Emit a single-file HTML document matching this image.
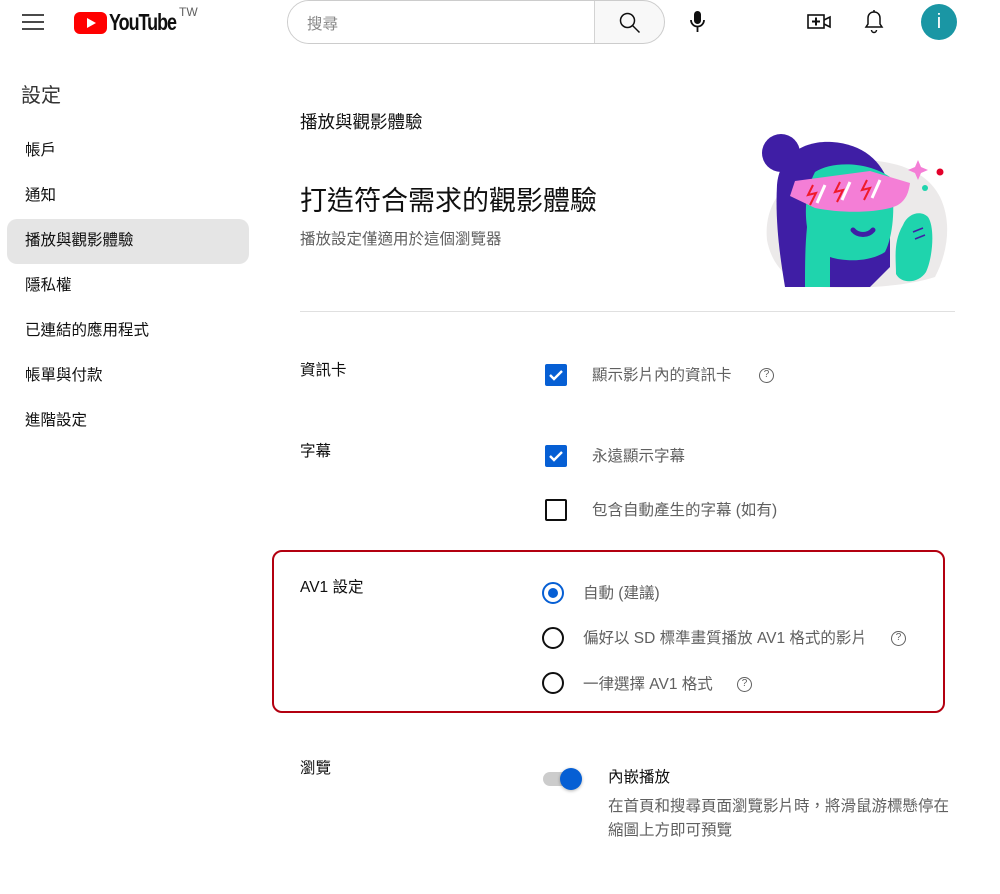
<!DOCTYPE html>
<html><head><meta charset="utf-8">
<style>
*{margin:0;padding:0;box-sizing:border-box}
body{width:1000px;height:894px;background:#fff;font-family:"Liberation Sans","Noto Sans CJK TC",sans-serif;color:#0f0f0f;position:relative;overflow:hidden}
.a{position:absolute;white-space:nowrap}
.side{font-size:15.5px;left:25px;line-height:20px}
.g{color:#606060;font-size:15.5px;line-height:20px}
.cb{position:absolute;width:22px;height:22px;border-radius:2px;background:#065fd4}
.cbo{position:absolute;width:22px;height:22px;border-radius:2px;border:2px solid #0f0f0f}
.rd{position:absolute;width:22px;height:22px;border-radius:50%;border:2px solid #0f0f0f}
.q{position:absolute;width:15px;height:15px;border-radius:50%;border:1.3px solid #606060;font-size:10px;line-height:12px;text-align:center;color:#606060}
</style></head><body>
<!-- header -->
<svg class="a" style="left:22px;top:13px" width="22" height="18"><path d="M0 2h22M0 9h22M0 16h22" stroke="#0f0f0f" stroke-width="1.6"/></svg>
<svg class="a" style="left:74px;top:12px" width="33" height="22"><rect width="33" height="22" rx="6" fill="#f00"/><path d="M13 6v10l9-5z" fill="#fff"/></svg>
<div class="a" style="left:109px;top:9px;font-size:23px;font-weight:bold;letter-spacing:-1.3px;transform:scaleX(.78);transform-origin:left">YouTube</div>
<div class="a" style="left:179px;top:5px;font-size:12px;color:#606060">TW</div>
<div class="a" style="left:287px;top:0;width:378px;height:44px;border:1px solid #ccc;border-radius:22px;background:#f8f8f8;overflow:hidden">
 <div style="position:absolute;left:0;top:0;width:307px;height:42px;background:#fff;border-right:1px solid #d3d3d3"></div>
 <div style="position:absolute;left:19px;top:11px;font-size:15.5px;color:#888">搜尋</div>
 <svg style="position:absolute;left:330px;top:10px" width="24" height="24"><circle cx="9.5" cy="9.5" r="7" fill="none" stroke="#0f0f0f" stroke-width="1.5"/><path d="M14.5 14.5l7 7" stroke="#0f0f0f" stroke-width="1.5"/></svg>
</div>
<svg class="a" style="left:688px;top:10px" width="20" height="24"><rect x="6" y="1" width="7" height="13" rx="3.5" fill="#0f0f0f"/><path d="M3 10a6.5 6.5 0 0013 0M9.5 17v5" stroke="#0f0f0f" stroke-width="1.8" fill="none"/></svg>
<svg class="a" style="left:807px;top:11px" width="26" height="22"><rect x="1" y="4" width="16" height="13" fill="none" stroke="#0f0f0f" stroke-width="1.6"/><path d="M9 6.5v8M5 10.5h8" stroke="#0f0f0f" stroke-width="2"/><path d="M17 9l6-3v10l-6-3" fill="none" stroke="#0f0f0f" stroke-width="1.6"/></svg>
<svg class="a" style="left:862px;top:9px" width="24" height="26"><path d="M12 3c-4 0-6 3-6 6v6l-2 3h16l-2-3V9c0-3-2-6-6-6z" fill="none" stroke="#0f0f0f" stroke-width="1.5"/><path d="M12 1v2M9.5 21a2.5 2.5 0 005 0" stroke="#0f0f0f" stroke-width="1.5" fill="none"/></svg>
<div class="a" style="left:921px;top:4px;width:36px;height:36px;border-radius:50%;background:#1a96a4;color:#fff;font-size:20px;text-align:center;line-height:36px">i</div>

<!-- sidebar -->
<div class="a" style="left:21px;top:79px;font-size:20px;color:#333">設定</div>
<div class="a" style="left:7px;top:219px;width:242px;height:45px;border-radius:10px;background:#e5e5e5"></div>
<div class="a side" style="top:141px">帳戶</div>
<div class="a side" style="top:186px">通知</div>
<div class="a side" style="top:231px">播放與觀影體驗</div>
<div class="a side" style="top:276px">隱私權</div>
<div class="a side" style="top:321px">已連結的應用程式</div>
<div class="a side" style="top:366px">帳單與付款</div>
<div class="a side" style="top:411px">進階設定</div>

<!-- main -->
<div class="a" style="left:300px;top:109px;font-size:17.5px">播放與觀影體驗</div>
<div class="a" style="left:300px;top:179px;font-size:27px;color:#0f0f0f">打造符合需求的觀影體驗</div>
<div class="a g" style="left:300px;top:230px">播放設定僅適用於這個瀏覽器</div>
<svg class="a" style="left:755px;top:130px" width="200" height="160">
 <path d="M12 110C8 70 35 40 85 32c45-6 85 5 100 35 12 25 8 55-5 80-30 10-80 12-115 10-30-2-48-20-53-47z" fill="#eceaea"/>
 <circle cx="26" cy="23" r="19" fill="#3f1ea5"/>
 <path d="M22 55c2-28 25-45 55-43 30 2 50 18 58 45v80l-20 20H30c-5-30-10-65-8-102z" fill="#3f1ea5"/>
 <path d="M60 42c15-10 50-12 75 5 5 20 5 55-5 75-15 10-40 10-55 5v30H50c0-20 0-40 2-60-3-20 0-40 8-55z" fill="#1fd4ad"/>
 <path d="M35 66l5-15 75-10 40 12c-2 15-8 22-20 25-20 5-50 5-75 0z" fill="#f47ed6"/>
 <path d="M58 55l-5 10 8-2-6 12M85 52l-5 10 8-2-6 12M112 50l-5 10 8-2-6 12" stroke="#f01a2a" stroke-width="2" fill="none"/>
 <path d="M70 55l-8 18M95 52l-8 18M125 50l-8 18" stroke="#fff" stroke-width="3"/>
 <path d="M98 100c5 6 15 6 20 0" stroke="#3f1ea5" stroke-width="5" fill="none" stroke-linecap="round"/>
 <path d="M148 95c5-12 18-15 25-8 7 10 5 40-2 55-8 12-25 12-30 2 0-15-3-32 7-49z" fill="#1fd4ad"/>
 <path d="M158 102l10-4M160 109l10-4" stroke="#3f1ea5" stroke-width="1.5"/>
 <path d="M163 30l3 7 7 3-7 3-3 7-3-7-7-3 7-3z" fill="#f47ed6"/>
 <circle cx="185" cy="42" r="3.5" fill="#e3002a"/>
 <circle cx="170" cy="58" r="3" fill="#1fd4ad"/>
</svg>
<div class="a" style="left:300px;top:311px;width:655px;height:1px;background:#e0e0e0"></div>

<div class="a" style="left:300px;top:358px;font-size:15.5px">資訊卡</div>
<div class="cb" style="left:545px;top:364px"></div>
<svg class="a" style="left:545px;top:364px" width="22" height="22"><path d="M5 11l4 4 8-8" stroke="#fff" stroke-width="2.4" fill="none"/></svg>
<div class="a g" style="left:592px;top:366px">顯示影片內的資訊卡</div>
<div class="q" style="left:759px;top:368px">?</div>

<div class="a" style="left:300px;top:439px;font-size:15.5px">字幕</div>
<div class="cb" style="left:545px;top:445px"></div>
<svg class="a" style="left:545px;top:445px" width="22" height="22"><path d="M5 11l4 4 8-8" stroke="#fff" stroke-width="2.4" fill="none"/></svg>
<div class="a g" style="left:592px;top:447px">永遠顯示字幕</div>
<div class="cbo" style="left:545px;top:499px"></div>
<div class="a g" style="left:592px;top:501px">包含自動產生的字幕 (如有)</div>

<div class="a" style="left:272px;top:550px;width:673px;height:163px;border:2px solid #b30010;border-radius:10px"></div>
<div class="a" style="left:300px;top:575px;font-size:15.5px">AV1 設定</div>
<div class="rd" style="left:542px;top:582px;border-color:#065fd4"></div>
<div class="a" style="left:548px;top:588px;width:10px;height:10px;border-radius:50%;background:#065fd4"></div>
<div class="a g" style="left:583px;top:584px">自動 (建議)</div>
<div class="rd" style="left:542px;top:627px"></div>
<div class="a g" style="left:583px;top:629px">偏好以 SD 標準畫質播放 AV1 格式的影片</div>
<div class="q" style="left:891px;top:631px">?</div>
<div class="rd" style="left:542px;top:672px"></div>
<div class="a g" style="left:583px;top:675px">一律選擇 AV1 格式</div>
<div class="q" style="left:737px;top:677px">?</div>

<div class="a" style="left:300px;top:756px;font-size:15.5px">瀏覽</div>
<div class="a" style="left:543px;top:772px;width:36px;height:14px;border-radius:7px;background:#ccc"></div>
<div class="a" style="left:560px;top:768px;width:22px;height:22px;border-radius:50%;background:#065fd4;box-shadow:0 1px 3px rgba(0,0,0,.3)"></div>
<div class="a" style="left:608px;top:768px;font-size:15.5px;line-height:20px">內嵌播放</div>
<div class="a g" style="left:608px;top:795px;line-height:24px">在首頁和搜尋頁面瀏覽影片時，將滑鼠游標懸停在<br>縮圖上方即可預覽</div>
</body></html>
